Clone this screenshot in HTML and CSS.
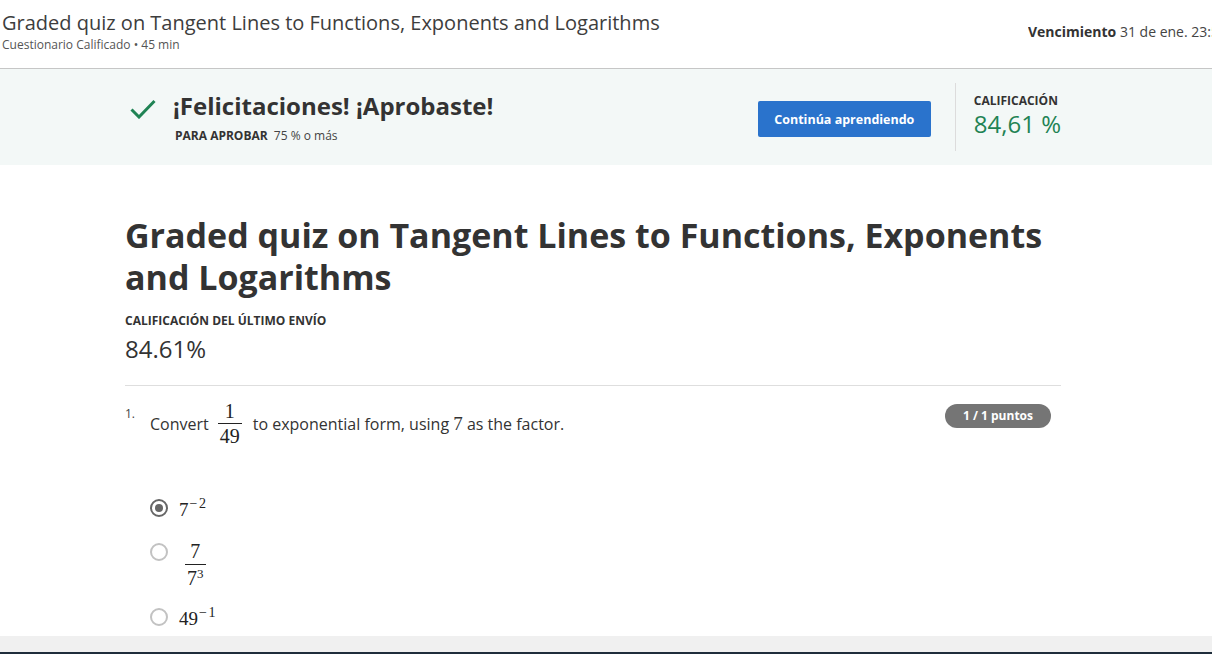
FILE: index.html
```html
<!DOCTYPE html>
<html lang="es">
<head>
<meta charset="utf-8">
<title>Graded quiz</title>
<link rel="stylesheet" href="styles.css">
</head>
<body>
<header class="topbar">
  <div class="topbar-left">
    <h1 class="topbar-title">Graded quiz on Tangent Lines to Functions, Exponents and Logarithms</h1>
    <div class="topbar-sub">Cuestionario Calificado • 45 min</div>
  </div>
  <div class="due"><b>Vencimiento</b> 31 de ene. 23:59 PST</div>
</header>

<section class="banner">
  <div class="banner-inner">
    <div class="pass">
      <svg class="check" width="26" height="20" viewBox="0 0 26 20"><path d="M1.5 10.5 L9 18 L24.5 2" fill="none" stroke="#1f8354" stroke-width="3"/></svg>
      <div class="pass-text">
        <div class="pass-title">¡Felicitaciones! ¡Aprobaste!</div>
        <div class="pass-req"><b>PARA APROBAR</b> 75 % o más</div>
      </div>
    </div>
    <button class="btn">Continúa aprendiendo</button>
    <div class="divider"></div>
    <div class="grade">
      <div class="grade-label">CALIFICACIÓN</div>
      <div class="grade-value">84,61 %</div>
    </div>
  </div>
</section>

<main class="main">
  <h2 class="quiz-title">Graded quiz on Tangent Lines to Functions, Exponents and Logarithms</h2>
  <div class="last-label">CALIFICACIÓN DEL ÚLTIMO ENVÍO</div>
  <div class="last-value">84.61%</div>
  <hr class="sep">

  <div class="question">
    <div class="qnum">1.</div>
    <div class="qtext">
      <span>Convert</span>
      <span class="frac"><span class="num">1</span><span class="den">49</span></span>
      <span>to exponential form, using <span class="m">7</span> as the factor.</span>
    </div>
    <div class="badge">1 / 1 puntos</div>
  </div>

  <ul class="options">
    <li class="option">
      <span class="radio checked"></span>
      <span class="m">7<sup>−2</sup></span>
    </li>
    <li class="option opt-frac">
      <span class="radio"></span>
      <span class="frac small"><span class="num">7</span><span class="den">7<sup>3</sup></span></span>
    </li>
    <li class="option">
      <span class="radio"></span>
      <span class="m">49<sup>−1</sup></span>
    </li>
  </ul>
</main>

<footer class="footer"></footer>
</body>
</html>
```
FILE: styles.css
```css
* { box-sizing: border-box; }

html, body {
  margin: 0;
  padding: 0;
}

body {
  width: 1212px;
  height: 654px;
  overflow: hidden;
  font-family: "Open Sans", "Liberation Sans", sans-serif;
  color: #333;
  background: #fff;
}

/* top bar */
.topbar {
  display: grid;
  grid-template-columns: 1fr 184px;
  height: 69px;
  padding-top: 10px;
  border-bottom: 1px solid #c6c6c6;
}

.topbar-title {
  margin: 0;
  padding-left: 2px;
  font-size: 20px;
  line-height: 26px;
  font-weight: 400;
  color: #3d3d3d;
  white-space: nowrap;
}

.topbar-sub {
  margin-top: 1px;
  padding-left: 2px;
  font-size: 12px;
  line-height: 16px;
  color: #555;
}

.due {
  padding-top: 12px;
  font-size: 14px;
  line-height: 20px;
  color: #444;
  white-space: nowrap;
  overflow: hidden;
}

.due b { color: #333; }

/* banner */
.banner {
  height: 96px;
  background: #f3f8f7;
}

.banner-inner {
  display: flex;
  width: 936px;
  margin-left: 125px;
  height: 100%;
}

.pass {
  display: flex;
  align-items: flex-start;
  padding-top: 22px;
  padding-left: 5px;
}

.check {
  margin-top: 8px;
  margin-right: 17px;
}

.pass-title {
  font-size: 24px;
  line-height: 30px;
  font-weight: 700;
  color: #333;
}

.pass-req {
  margin-top: 7px;
  padding-left: 2px;
  font-size: 12px;
  line-height: 16px;
  color: #444;
}

.pass-req b {
  margin-right: 3px;
  color: #333;
}

.btn {
  margin-left: auto;
  margin-top: 32px;
  width: 173px;
  height: 36px;
  border: none;
  border-radius: 2px;
  background: #2a73cc;
  color: #fff;
  font-family: "Open Sans", "Liberation Sans", sans-serif;
  font-size: 12.5px;
  font-weight: 700;
}

.divider {
  width: 1px;
  height: 68px;
  margin-top: 14px;
  margin-left: 24px;
  background: #dcdcdc;
}

.grade {
  padding-left: 18px;
  padding-top: 24px;
}

.grade-label {
  font-size: 12px;
  line-height: 16px;
  font-weight: 700;
  color: #333;
}

.grade-value {
  margin-top: 1px;
  font-size: 24px;
  line-height: 28px;
  color: #1f8354;
  white-space: nowrap;
}

/* main */
.main {
  width: 936px;
  margin-left: 125px;
}

.quiz-title {
  margin: 49px 0 0;
  font-size: 34px;
  line-height: 42px;
  font-weight: 700;
  color: #333;
}

.last-label {
  margin-top: 15px;
  font-size: 12px;
  line-height: 16px;
  font-weight: 700;
  color: #333;
}

.last-value {
  margin-top: 4px;
  font-size: 24px;
  line-height: 32px;
  color: #333;
}

.sep {
  margin: 20px 0 0;
  border: none;
  border-top: 1px solid #dedede;
}

/* question */
.question {
  display: flex;
  align-items: flex-start;
  margin-top: 14px;
}

.qnum {
  width: 25px;
  padding-top: 6px;
  font-size: 12px;
  line-height: 16px;
  color: #444;
}

.qtext {
  display: flex;
  align-items: center;
  font-size: 16px;
  color: #333;
}

.m {
  font-family: "Liberation Serif", "DejaVu Serif", serif;
  font-size: 19px;
}

.frac {
  display: inline-flex;
  flex-direction: column;
  align-items: center;
  margin: 0 11px 0 9px;
  font-family: "Liberation Serif", "DejaVu Serif", serif;
  font-size: 20px;
  line-height: 22px;
  color: #222;
}

.frac .num {
  padding: 0 2px 1px;
}

.frac .den {
  padding: 1px 2px 0;
  border-top: 1.5px solid #222;
}

.badge {
  margin-left: auto;
  margin-right: 10px;
  margin-top: 4px;
  width: 106px;
  height: 24px;
  border-radius: 12px;
  background: #757575;
  color: #fff;
  font-size: 12px;
  line-height: 24px;
  font-weight: 700;
  text-align: center;
}

/* options */
.options {
  list-style: none;
  margin: 48px 0 0;
  padding: 0 0 0 25px;
}

.option {
  display: flex;
  align-items: flex-start;
  min-height: 30px;
  margin-bottom: 14px;
  color: #222;
}

.option:last-child {
  margin-bottom: 0;
}

.option .m {
  line-height: 30px;
  margin-left: 11px;
}

.option sup {
  font-size: 14px;
  vertical-align: 8px;
  line-height: 0;
  margin-left: 1px;
  letter-spacing: 1.5px;
}

.radio {
  flex: none;
  width: 18px;
  height: 18px;
  margin-top: 4px;
  border: 2px solid #c2c2c2;
  border-radius: 50%;
  position: relative;
}

.radio.checked {
  border-color: #666;
}

.radio.checked::after {
  content: "";
  position: absolute;
  left: 3px;
  top: 3px;
  width: 8px;
  height: 8px;
  border-radius: 50%;
  background: #666;
}

.opt-frac .frac {
  margin: 0 0 0 17px;
  font-size: 20px;
  line-height: 24px;
}

.opt-frac .frac sup {
  font-size: 13px;
  vertical-align: 7px;
  margin-left: 0;
  letter-spacing: 0;
}

.footer {
  height: 18px;
  margin-top: 2px;
  background: #f0f0f0;
  border-bottom: 2px solid #1f2d3b;
}
```
